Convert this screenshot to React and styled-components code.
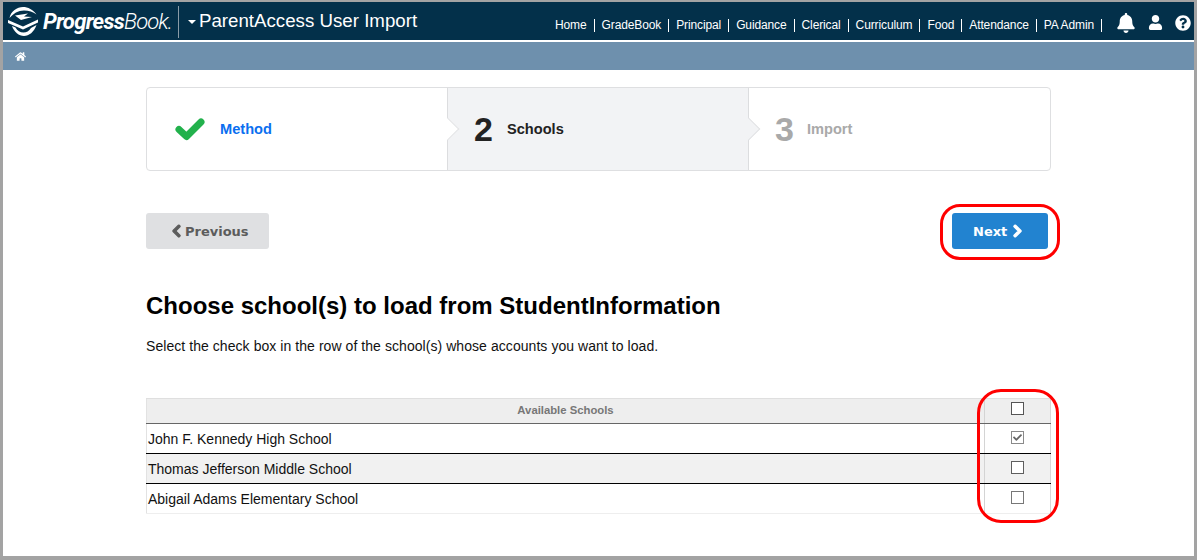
import React from 'react';
import styled, { createGlobalStyle } from 'styled-components';
import {
  FaBell,
  FaCheck,
  FaChevronLeft,
  FaChevronRight,
  FaHome,
  FaQuestionCircle,
  FaUser
} from 'react-icons/fa';

const GlobalStyle = createGlobalStyle`
  html, body {
    margin: 0;
    padding: 0;
    height: 100%;
    overflow: hidden;
    background: #a3a3a3;
  }
  body {
    font-family: "Liberation Sans", Arial, sans-serif;
  }
  * {
    box-sizing: border-box;
  }
`;

const Frame = styled.div`
  width: 1197px;
  height: 560px;
  padding: 2px 3px 4px 3px;
`;

const Window = styled.div`
  position: relative;
  height: 100%;
  background: #fff;
  overflow: hidden;
`;

const Header = styled.header`
  display: flex;
  align-items: center;
  height: 38px;
  background: #03304a;
  color: #fff;
`;

const Brand = styled.div`
  display: flex;
  align-items: center;
  width: 176px;
  height: 32px;
  padding-left: 5px;
  border-right: 1px solid #8a9ca8;
  margin-top: 1px;
`;

const BrandName = styled.span`
  margin-left: 5px;
  font-family: Roboto, "Liberation Sans", sans-serif;
  font-size: 22px;
  font-style: italic;
  letter-spacing: -0.7px;
  font-weight: 700;
  white-space: nowrap;
`;

const BrandLight = styled.span`
  font-weight: 300;
  letter-spacing: -0.9px;
`;

const Caret = styled.span`
  width: 0;
  height: 0;
  margin-left: 9px;
  margin-top: 1px;
  border-left: 4px solid transparent;
  border-right: 4px solid transparent;
  border-top: 4px solid #fff;
`;

const Title = styled.h1`
  margin: 0 0 0 3px;
  font-size: 18.7px;
  font-weight: 400;
  white-space: nowrap;
`;

const Nav = styled.nav`
  display: flex;
  align-items: center;
  margin-left: auto;
  padding-top: 8px;
  font-size: 12px;
  letter-spacing: -0.12px;
  white-space: nowrap;
`;

const NavLink = styled.a`
  color: #fff;
  padding: 0 7px;
  border-right: 1px solid #fff;
  line-height: 13px;
  &:first-child {
    padding-left: 0;
  }
`;

const Tools = styled.div`
  display: flex;
  align-items: center;
  gap: 12px;
  margin: 0 3px 0 14px;
  font-size: 16px;
  padding-bottom: 5px;
`;

const Crumbs = styled.div`
  display: flex;
  align-items: center;
  height: 28px;
  margin-top: 2px;
  padding-left: 12px;
  background: #6e90ad;
  color: #fff;
  font-size: 11px;
`;

const Content = styled.main`
  width: 905px;
  margin: 17px 0 0 143px;
`;

const Stepper = styled.ol`
  display: grid;
  grid-template-columns: 300px 301px 1fr;
  height: 84px;
  margin: 0;
  padding: 0;
  list-style: none;
  border: 1px solid #dedfe1;
  border-radius: 4px;
`;

const Step = styled.li`
  position: relative;
  display: flex;
  align-items: center;
  padding-left: ${p => p.$pad}px;
  background: ${p => (p.$active ? '#f2f3f5' : 'transparent')};
  border-left: ${p => (p.$first ? 'none' : '1px solid #dcdddf')};
  &::before {
    content: ${p => (p.$first ? 'none' : '""')};
    position: absolute;
    left: -8px;
    top: 33px;
    width: 15px;
    height: 15px;
    background: ${p => (p.$prevActive ? '#f2f3f5' : '#fff')};
    border-top: 1px solid #e2e3e5;
    border-right: 1px solid #e2e3e5;
    transform: rotate(45deg);
  }
`;

const StepCheck = styled.svg`
  width: 30px;
  height: 23px;
  margin-right: 15px;
`;

const StepNumber = styled.span`
  position: relative;
  width: ${p => (p.$muted ? 32 : 33)}px;
  font-size: 34px;
  font-weight: 700;
  color: ${p => (p.$muted ? '#a9a9a9' : '#222')};
`;

const StepLabel = styled.span`
  font-size: 14.6px;
  font-weight: 700;
  color: ${p => p.$color};
`;

const Actions = styled.div`
  display: flex;
  justify-content: space-between;
  margin-top: 42px;
  padding-right: 3px;
`;

const Button = styled.button`
  display: flex;
  align-items: center;
  gap: ${p => p.$gap}px;
  height: 36px;
  width: ${p => p.$width}px;
  padding: 0 0 0 ${p => p.$pad}px;
  border: none;
  border-radius: 3px;
  background: ${p => (p.$primary ? '#2283d0' : '#dfe0e2')};
  color: ${p => (p.$primary ? '#fff' : '#5c5c5c')};
  font-family: "DejaVu Sans", sans-serif;
  font-size: 13px;
  font-weight: 700;
  svg {
    width: 9px;
    height: 14px;
    stroke: currentColor;
    stroke-width: 45;
  }
`;

const Heading = styled.h2`
  margin: 43px 0 0;
  font-size: 24px;
  line-height: 28px;
  font-weight: 700;
  color: #000;
`;

const Intro = styled.p`
  margin: 18px 0 0;
  font-size: 14px;
  line-height: 16px;
  letter-spacing: 0.06px;
  color: #111;
`;

const Table = styled.table`
  width: 905px;
  margin-top: 44px;
  border-collapse: collapse;
  table-layout: fixed;
  border-left: 1px solid #e2e2e2;
  border-right: 1px solid #d8d8d8;
`;

const HeadCell = styled.th`
  height: 25px;
  padding: 0 0 2px;
  background: #eeeeee;
  border-top: 1px solid #dfdfdf;
  border-bottom: 1px solid #666;
  border-left: ${p => (p.$check ? '1px solid #d4d4d4' : 'none')};
  color: #777;
  font-size: 11.3px;
  font-weight: 700;
  width: ${p => (p.$check ? '66px' : 'auto')};
`;

const Row = styled.tr`
  background: ${p => (p.$shaded ? '#f1f1f1' : '#fff')};
`;

const Cell = styled.td`
  height: 30px;
  padding: 0 0 0 1px;
  font-size: 14px;
  color: #111;
  border-bottom: ${p => (p.$last ? '1px solid #eeeeee' : '1px solid #000')};
`;

const CheckCell = styled(Cell)`
  padding: 0;
  border-left: 1px solid #d4d4d4;
`;

const Box = styled.span`
  display: flex;
  align-items: center;
  justify-content: center;
  width: 13px;
  height: 13px;
  margin: ${p => p.$lift}px auto 0;
  background: #fff;
  border: 1px solid ${p => p.$color};
  color: #666;
  font-size: 9px;
`;

const Callout = styled.div`
  position: absolute;
  left: ${p => p.$x}px;
  top: ${p => p.$y}px;
  width: ${p => p.$w}px;
  height: ${p => p.$h}px;
  border: 3px solid #ff0000;
  border-radius: ${p => p.$r}px;
  pointer-events: none;
`;

const navItems = ['Home', 'GradeBook', 'Principal', 'Guidance', 'Clerical', 'Curriculum', 'Food', 'Attendance', 'PA Admin'];

const schools = [
  { name: 'John F. Kennedy High School', checked: true, box: '#8a8a8a' },
  { name: 'Thomas Jefferson Middle School', box: '#5e5e5e' },
  { name: 'Abigail Adams Elementary School', box: '#777' }
];

const Emblem = () => (
  <svg width="30" height="29" viewBox="0 0 30 29" fill="#fff">
    <path d="M1.5 11C3 4 9 0 15 0C20 0 25 2.5 28.5 7.5C25 5 21 3.5 16 3.5C10 3.5 5.5 6.5 1.5 11Z" />
    <path d="M7 8.5L20 6.5L16 9.5L24 10L13 13Z" />
    <path d="M0 13L15 19.5L30 12.5V15.5L15 22.5L0 16Z" />
    <path d="M4 19C6 25 11 29 16 29C21 29 26 25 28.5 18L23 21C21 24 18.5 25.5 15.5 25.5C12 25.5 9.5 24 7.5 20.5Z" />
  </svg>
);

const App = () => (
  <Frame>
    <GlobalStyle />
    <Window>
      <Header>
        <Brand>
          <Emblem />
          <BrandName>Progress<BrandLight>Book.</BrandLight></BrandName>
        </Brand>
        <Caret />
        <Title>ParentAccess User Import</Title>
        <Nav>
          {navItems.map(item => <NavLink key={item}>{item}</NavLink>)}
          <Tools>
            <FaBell size={20} />
            <FaUser size={15} />
            <FaQuestionCircle size={16} />
          </Tools>
        </Nav>
      </Header>
      <Crumbs><FaHome /></Crumbs>
      <Content>
        <Stepper>
          <Step $first $pad={28}>
            <StepCheck viewBox="0 0 30 23" fill="none">
              <path d="M4 11.5L11.5 18.5L26 4" stroke="#22b14c" strokeWidth="7" strokeLinecap="round" strokeLinejoin="round" />
            </StepCheck>
            <StepLabel $color="#0b6ff0">Method</StepLabel>
          </Step>
          <Step $active $pad={26}>
            <StepNumber>2</StepNumber>
            <StepLabel $color="#222">Schools</StepLabel>
          </Step>
          <Step $prevActive $pad={26}>
            <StepNumber $muted>3</StepNumber>
            <StepLabel $color="#a9a9a9">Import</StepLabel>
          </Step>
        </Stepper>
        <Actions>
          <Button $width={123} $pad={26} $gap={4}><FaChevronLeft />Previous</Button>
          <Button $primary $width={96} $pad={21} $gap={6}>Next<FaChevronRight /></Button>
        </Actions>
        <Heading>Choose school(s) to load from StudentInformation</Heading>
        <Intro>Select the check box in the row of the school(s) whose accounts you want to load.</Intro>
        <Table>
          <thead>
            <tr>
              <HeadCell>Available Schools</HeadCell>
              <HeadCell $check><Box $color="#555" $lift={-3} /></HeadCell>
            </tr>
          </thead>
          <tbody>
            {schools.map((school, i) => (
              <Row key={school.name} $shaded={i === 1}>
                <Cell $last={i === 2}>{school.name}</Cell>
                <CheckCell $last={i === 2}>
                  <Box $color={school.box} $lift={-2}>{school.checked && <FaCheck />}</Box>
                </CheckCell>
              </Row>
            ))}
          </tbody>
        </Table>
      </Content>
      <Callout $x={937} $y={202} $w={120} $h={56} $r={20} />
      <Callout $x={974} $y={387} $w={82} $h={134} $r={24} />
    </Window>
  </Frame>
);

export default App;
